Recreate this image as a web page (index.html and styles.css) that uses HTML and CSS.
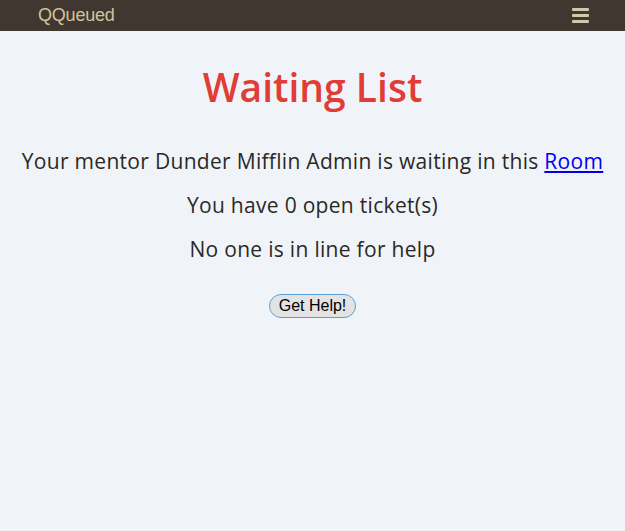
FILE: index.html
```html
<!DOCTYPE html>
<html>
<head>
<meta charset="utf-8">
<link rel="stylesheet" href="styles.css">
</head>
<body>
<nav class="navbar">
  <span class="brand">QQueued</span>
  <span class="toggler" aria-label="menu">
    <span class="bar"></span><span class="bar"></span><span class="bar"></span>
  </span>
</nav>
<main class="content">
  <h1 class="title">Waiting List</h1>
  <p class="line">Your mentor Dunder Mifflin Admin is waiting in this <a href="#" class="link">Room</a></p>
  <p class="line">You have 0 open ticket(s)</p>
  <p class="line">No one is in line for help</p>
  <div class="actions"><button class="help-btn">Get Help!</button></div>
</main>
</body>
</html>
```
FILE: styles.css
```css
html, body {
  margin: 0;
  padding: 0;
  background: #f0f4f8;
  height: 100%;
}
.navbar {
  height: 31px;
  background: #403731;
  display: flex;
  align-items: center;
  justify-content: space-between;
  padding: 0 36px 0 38px;
}
.brand {
  font-family: "Liberation Sans", Arial, sans-serif;
  font-size: 18px;
  letter-spacing: -0.2px;
  color: #cfc49c;
  line-height: 31px;
}
.toggler {
  display: flex;
  flex-direction: column;
  gap: 3px;
  width: 17px;
}
.bar {
  display: block;
  height: 3px;
  background: #cfc9a9;
  border-radius: 1px;
}
.content {
  text-align: center;
  font-family: "Open Sans", sans-serif;
  color: #2b2926;
}
.title {
  margin: 30px 0 34px;
  font-family: "Open Sans", sans-serif;
  font-weight: 600;
  font-size: 39px;
  line-height: 52px;
  color: #e03d36;
}
.line {
  margin: 0 0 16px;
  font-size: 21px;
  font-weight: 500;
  letter-spacing: 0.3px;
  line-height: 28px;
}
.link {
  color: #0000ee;
}
.actions {
  padding-top: 15px;
}
.help-btn {
  font-family: "Liberation Sans", Arial, sans-serif;
  font-size: 16px;
  color: #000;
  background: #e3e3e3;
  border: 1px solid #5b9fd6;
  border-radius: 12px;
  padding: 2px 9px;
  height: 24px;
}
```
